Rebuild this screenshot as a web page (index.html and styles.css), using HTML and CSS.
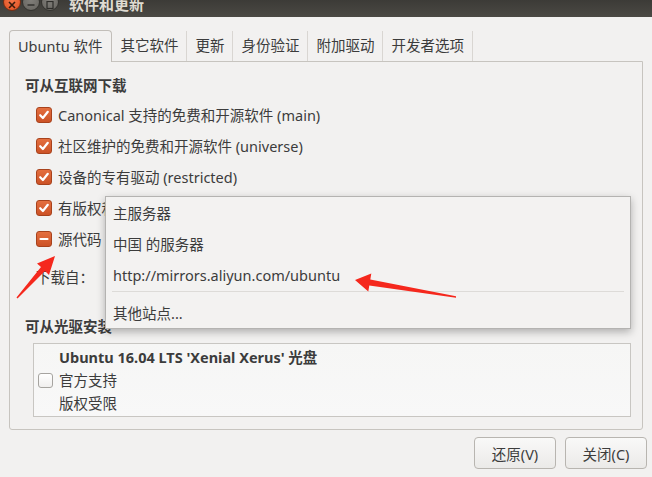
FILE: index.html
```html
<!DOCTYPE html>
<html lang="zh-CN">
<head>
<meta charset="utf-8">
<title>软件和更新</title>
<link rel="stylesheet" href="styles.css">
</head>
<body>
<div class="window">
  <div class="titlebar">
    <div class="wbtns">
      <span class="wb close"><svg width="8" height="8" viewBox="0 0 8 8"><path d="M1 1L7 7M7 1L1 7" stroke="#3a1a0c" stroke-width="1.6"/></svg></span>
      <span class="wb"><svg width="8" height="8" viewBox="0 0 8 8"><path d="M0.5 4H7.5" stroke="#2e2d2a" stroke-width="1.4"/></svg></span>
      <span class="wb"><svg width="8" height="8" viewBox="0 0 8 8"><rect x="1" y="0.5" width="6" height="7" fill="none" stroke="#2e2d2a" stroke-width="1.2"/></svg></span>
    </div>
    <div class="title">软件和更新</div>
  </div>

  <div class="main">
    <div class="tabs">
      <div class="tab active">Ubuntu 软件</div>
      <div class="tab">其它软件</div>
      <div class="tab">更新</div>
      <div class="tab">身份验证</div>
      <div class="tab">附加驱动</div>
      <div class="tab">开发者选项</div>
    </div>

    <div class="panel">
      <div class="sect">可从互联网下载</div>
      <div class="opts">
        <div class="opt"><span class="cb on"><svg width="12" height="12" viewBox="0 0 12 12"><path d="M2.2 6.2L4.9 9L9.8 2.8" fill="none" stroke="#fff" stroke-width="2.2" stroke-linecap="round" stroke-linejoin="round"/></svg></span>Canonical 支持的免费和开源软件 (main)</div>
        <div class="opt"><span class="cb on"><svg width="12" height="12" viewBox="0 0 12 12"><path d="M2.2 6.2L4.9 9L9.8 2.8" fill="none" stroke="#fff" stroke-width="2.2" stroke-linecap="round" stroke-linejoin="round"/></svg></span>社区维护的免费和开源软件 (universe)</div>
        <div class="opt"><span class="cb on"><svg width="12" height="12" viewBox="0 0 12 12"><path d="M2.2 6.2L4.9 9L9.8 2.8" fill="none" stroke="#fff" stroke-width="2.2" stroke-linecap="round" stroke-linejoin="round"/></svg></span>设备的专有驱动 (restricted)</div>
        <div class="opt"><span class="cb on"><svg width="12" height="12" viewBox="0 0 12 12"><path d="M2.2 6.2L4.9 9L9.8 2.8" fill="none" stroke="#fff" stroke-width="2.2" stroke-linecap="round" stroke-linejoin="round"/></svg></span>有版权和合法性问题的软件 (multiverse)</div>
        <div class="opt"><span class="cb on"><svg width="12" height="12" viewBox="0 0 12 12"><path d="M2.5 6H9.5" fill="none" stroke="#fff" stroke-width="2.2" stroke-linecap="round"/></svg></span>源代码</div>
      </div>
      <div class="dl">下载自：</div>

      <div class="sect cdsect">可从光驱安装</div>
      <div class="cdbox">
        <span class="cb off"></span>
        <div class="cdtext">
          <div class="cdname">Ubuntu 16.04 LTS 'Xenial Xerus' 光盘</div>
          <div>官方支持</div>
          <div>版权受限</div>
        </div>
      </div>
    </div>

    <div class="buttons">
      <button class="btn">还原(V)</button>
      <button class="btn">关闭(C)</button>
    </div>
  </div>

  <div class="menu">
    <div class="mi">主服务器</div>
    <div class="mi">中国 的服务器</div>
    <div class="mi">http://mirrors.aliyun.com/ubuntu</div>
    <div class="msep"></div>
    <div class="mi">其他站点...</div>
  </div>

  <svg class="arrows" width="652" height="477" viewBox="0 0 652 477">
    <polygon points="55,256 49,275 45,271 17.5,298.5 16.5,297.5 41,267 37,263.5" fill="#f5281d"/>
    <polygon points="355,280 371.3,273.6 370.3,279.5 456,296.3 456,297.7 369.3,285.5 368.3,291.4" fill="#f5281d"/>
  </svg>
</div>
</body>
</html>
```

FILE: styles.css
```css
* { box-sizing: border-box; }
html, body { margin: 0; padding: 0; }
body {
  width: 652px;
  height: 477px;
  overflow: hidden;
  background: #f2f1f0;
  font-family: "Noto Sans", "Noto Sans CJK SC", sans-serif;
  font-size: 14.5px;
  color: #3c3c3c;
}
.window {
  position: relative;
  width: 652px;
  height: 477px;
  background: #f2f1f0;
}
.titlebar {
  height: 17px;
  background: linear-gradient(#3c3b37, #4b4944);
  display: flex;
  align-items: flex-start;
  overflow: hidden;
}
.wbtns {
  display: flex;
  gap: 1px;
  margin-left: 3px;
  margin-top: -7px;
}
.wb {
  width: 18px;
  height: 18px;
  border-radius: 50%;
  background: radial-gradient(circle at 50% 40%, #807e79, #65635e);
  border: 1px solid #34332f;
  display: flex;
  align-items: center;
  justify-content: center;
  padding-top: 6px;
}
.wb.close {
  background: radial-gradient(circle at 50% 40%, #f4764a, #e0501f);
  border-color: #7a2d12;
}
.title {
  margin-left: 10px;
  margin-top: -6px;
  font-size: 15px;
  font-weight: bold;
  color: #dfdbd2;
  line-height: 20px;
}
.main {
  padding: 13px 5px 0 9px;
}
.tabs {
  display: flex;
  height: 31px;
  position: relative;
  z-index: 1;
}
.tab {
  padding: 0 8px 0 8px;
  line-height: 28px;
  margin-top: 1px;
  border-right: 1px solid #d9d6d2;
  white-space: nowrap;
}
.tab.active {
  margin-top: 0;
  padding: 0 9px 0 8px;
  line-height: 30px;
  height: 32px;
  border: 1px solid #c2beb9;
  border-bottom: none;
  border-radius: 4px 4px 0 0;
  background: #f2f1f0;
}
.panel {
  width: 634px;
  height: 369px;
  border: 1px solid #c7c4bf;
  border-radius: 0 0 3px 3px;
  padding: 13px 10px 0 15px;
}
.sect {
  font-weight: bold;
  line-height: 20px;
  height: 20px;
}
.opts {
  margin-top: 4px;
  padding-left: 11px;
}
.opt {
  display: flex;
  align-items: center;
  height: 31px;
  white-space: nowrap;
}
.cb {
  width: 16px;
  height: 16px;
  border-radius: 3px;
  margin-right: 6px;
  flex: none;
  display: flex;
  align-items: center;
  justify-content: center;
}
.cb.on {
  background: linear-gradient(#e46f3f, #cc5226);
  border: 1px solid #a8421c;
}
.cb.off {
  width: 15px;
  height: 15px;
  background: linear-gradient(#ffffff, #f0efee);
  border: 1px solid #a6a4a0;
  margin: 0 6px 0 4px;
}
.dl {
  margin-top: 7px;
  padding-left: 11px;
  height: 32px;
  line-height: 32px;
}
.cdsect {
  margin-top: 23px;
}
.cdbox {
  margin: 7px 0 0 8px;
  width: 598px;
  height: 74px;
  border: 1px solid #c8c6c2;
  background: linear-gradient(#f6f6f5, #f8f8f8);
  display: flex;
  align-items: center;
}
.cdtext {
  line-height: 23px;
  padding-top: 1px;
}
.cdname {
  font-weight: bold;
}
.buttons {
  display: flex;
  justify-content: flex-end;
  gap: 9px;
  margin-top: 7px;
}
.btn {
  width: 82px;
  height: 32px;
  font-family: inherit;
  font-size: 14.5px;
  color: #3c3c3c;
  border: 1px solid #b8b5b0;
  border-radius: 4px;
  background: linear-gradient(#f9f9f8, #ebeae8);
  padding: 0;
}
.menu {
  position: absolute;
  left: 105px;
  top: 196px;
  width: 526px;
  height: 133px;
  background: #f3f2f1;
  border: 1px solid #b4b3b1;
  box-shadow: 0 3px 8px rgba(0,0,0,0.28);
  padding-top: 1px;
  z-index: 5;
}
.mi {
  height: 31px;
  line-height: 31px;
  padding-left: 7px;
  white-space: nowrap;
}
.msep {
  height: 1px;
  background: #dddbd8;
  margin: 0 6px 6px 6px;
}
.arrows {
  position: absolute;
  left: 0;
  top: 0;
  z-index: 10;
  pointer-events: none;
}
```
